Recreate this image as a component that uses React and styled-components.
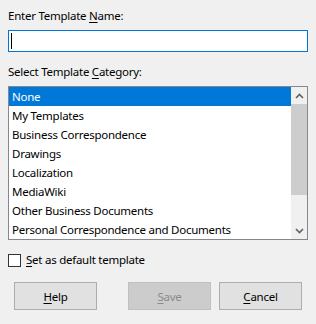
import React from "react";
import styled, { createGlobalStyle } from "styled-components";

const GlobalStyle = createGlobalStyle`
  html, body {
    margin: 0;
    padding: 0;
    background: #f0f0f0;
  }
  body {
    font-family: "Noto Sans", "Open Sans", sans-serif;
    font-size: 11.5px;
    letter-spacing: -0.25px;
    color: #000;
  }
`;

const Dialog = styled.div`
  width: 316px;
  height: 324px;
  box-sizing: border-box;
  padding: 8px 8px 0;
  display: flex;
  flex-direction: column;
`;

const Label = styled.div`
  height: 16px;
  line-height: 16px;
  margin-top: ${(p) => p.$top || 0}px;
  white-space: nowrap;
`;

const Mnemonic = styled.span`
  text-decoration: underline;
  text-underline-offset: 2px;
`;

const TextField = styled.div`
  margin-top: 6px;
  height: 22px;
  box-sizing: border-box;
  border: 1px solid #0078d7;
  background: #fff;
  display: flex;
  align-items: center;
  padding-left: 2px;
`;

const Caret = styled.span`
  width: 1px;
  height: 16px;
  background: #000;
`;

const ListBox = styled.div`
  margin-top: 6px;
  height: 154px;
  box-sizing: border-box;
  border: 1px solid #828790;
  background: #fff;
  display: flex;
`;

const Items = styled.div`
  flex: 1;
  display: flex;
  flex-direction: column;
`;

const Item = styled.div`
  height: 19px;
  line-height: 19px;
  padding-left: 3px;
  white-space: nowrap;
  background: ${(p) => (p.$selected ? "#0078d7" : "transparent")};
  color: ${(p) => (p.$selected ? "#fff" : "#000")};
`;

const ScrollBar = styled.div`
  width: 16px;
  background: #f0f0f0;
  display: flex;
  flex-direction: column;
`;

const ArrowButton = styled.div`
  height: 17px;
  display: flex;
  align-items: center;
  justify-content: center;
`;

const Thumb = styled.div`
  height: 91px;
  background: #cdcdcd;
`;

const Track = styled.div`
  flex: 1;
`;

const CheckRow = styled.div`
  margin-top: 12px;
  height: 16px;
  display: flex;
  align-items: center;
  gap: 5px;
  line-height: 16px;
`;

const CheckBox = styled.span`
  width: 13px;
  height: 13px;
  box-sizing: border-box;
  border: 1px solid #333;
  background: #fff;
`;

const ButtonRow = styled.div`
  margin-top: 14px;
  padding: 0 6px;
  display: flex;
  justify-content: space-between;
`;

const ButtonGroup = styled.div`
  display: flex;
  gap: 8px;
`;

const Button = styled.div`
  width: 83px;
  height: 28px;
  box-sizing: border-box;
  border: 1px solid ${(p) => (p.$disabled ? "#bfbfbf" : "#adadad")};
  background: ${(p) => (p.$disabled ? "#cccccc" : "#e1e1e1")};
  color: ${(p) => (p.$disabled ? "#8a8a8a" : "#000")};
  display: flex;
  align-items: center;
  justify-content: center;
`;

const Chevron = ({ up }) => (
  <svg width="9" height="6" viewBox="0 0 9 6">
    <polyline
      points={up ? "1,5 4.5,1.5 8,5" : "1,1 4.5,4.5 8,1"}
      fill="none"
      stroke="#606060"
      strokeWidth="1.6"
    />
  </svg>
);

const categories = [
  "None",
  "My Templates",
  "Business Correspondence",
  "Drawings",
  "Localization",
  "MediaWiki",
  "Other Business Documents",
  "Personal Correspondence and Documents",
];

export default function App() {
  return (
    <>
      <GlobalStyle />
      <Dialog>
        <Label>
          Enter Template <Mnemonic>N</Mnemonic>ame:
        </Label>
        <TextField>
          <Caret />
        </TextField>
        <Label $top={12}>
          Select Template <Mnemonic>C</Mnemonic>ategory:
        </Label>
        <ListBox>
          <Items>
            {categories.map((c, i) => (
              <Item key={c} $selected={i === 0}>
                {c}
              </Item>
            ))}
          </Items>
          <ScrollBar>
            <ArrowButton>
              <Chevron up />
            </ArrowButton>
            <Thumb />
            <Track />
            <ArrowButton>
              <Chevron />
            </ArrowButton>
          </ScrollBar>
        </ListBox>
        <CheckRow>
          <CheckBox />
          <span>
            <Mnemonic>S</Mnemonic>et as default template
          </span>
        </CheckRow>
        <ButtonRow>
          <Button>
            <span>
              <Mnemonic>H</Mnemonic>elp
            </span>
          </Button>
          <ButtonGroup>
            <Button $disabled>
              <span>
                <Mnemonic>S</Mnemonic>ave
              </span>
            </Button>
            <Button>
              <span>
                <Mnemonic>C</Mnemonic>ancel
              </span>
            </Button>
          </ButtonGroup>
        </ButtonRow>
      </Dialog>
    </>
  );
}
